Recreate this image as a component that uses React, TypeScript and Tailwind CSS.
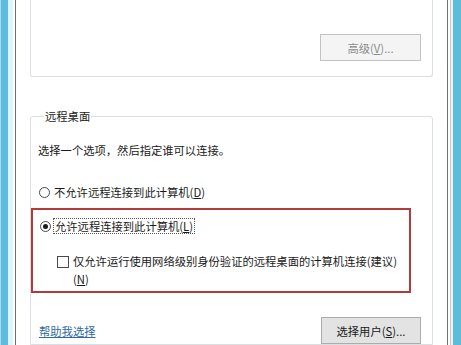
const font = "font-['Microsoft_YaHei','Noto_Sans_CJK_SC',sans-serif]";

function Radio({ checked }: { checked?: boolean }) {
  return (
    <span className="flex h-[11px] w-[11px] shrink-0 items-center justify-center rounded-full border border-[#4a4a4a] bg-white">
      {checked && <span className="h-[5px] w-[5px] rounded-full bg-[#1a1a1a]" />}
    </span>
  );
}

export default function App() {
  return (
    <div className={`flex h-[345px] w-[461px] overflow-hidden bg-white text-[11.3px] leading-[18px] text-[#1a1a1a] ${font}`}>
      {/* left window frame */}
      <div className="w-[1px] bg-[#a9dcec]" />
      <div className="w-[7px] bg-[#5cbcdc]" />
      <div className="w-[5px] bg-[#dff3f8]" />
      <div className="w-[2px] bg-white" />
      <div className="w-[1px] bg-[#707070]" />

      {/* dialog content */}
      <div className="flex w-[431px] flex-col px-[14px]">
        <div className="flex h-[88px] items-end justify-end rounded-b-[3px] border-x border-b border-[#d9dfe3] pb-[15px] pr-[11px]">
          <div className="flex h-[27px] w-[101px] items-center justify-center border border-[#c3c3c3] bg-[#f4f4f4] text-[#8c8c8c]">
            高级(<span className="underline">V</span>)...
          </div>
        </div>

        <fieldset className="mt-[31px] flex-1 rounded-t-[3px] border border-[#d9dfe3] pl-[7px] pr-[11px]">
          <legend className="ml-[6px] px-[1px] leading-[16px]">远程桌面</legend>

          <div className="mt-[17px]">选择一个选项，然后指定谁可以连接。</div>

          <div className="mt-[24px] flex items-center gap-[4px] pl-[1px]">
            <Radio />
            <span>
              不允许远程连接到此计算机(<span className="underline">D</span>)
            </span>
          </div>

          <div className="-ml-[7px] mt-[7px] h-[85px] w-[380px] border-2 border-[#b23a3a] pl-[7px] pt-[8px]">
            <div className="flex items-center gap-[2px]">
              <Radio checked />
              <span className="border border-dotted border-[#555] px-[1px] leading-[14px]">
                允许远程连接到此计算机(<span className="underline">L</span>)
              </span>
            </div>
            <div className="mt-[18px] flex items-start gap-[4px] pl-[17px]">
              <span className="mt-[4px] h-[12px] w-[12px] shrink-0 border border-[#4a4a4a] bg-white" />
              <span>
                仅允许运行使用网络级别身份验证的远程桌面的计算机连接(建议)
                <br />(<span className="underline">N</span>)
              </span>
            </div>
          </div>

          <div className="mt-[24px] flex items-center justify-between">
            <span className="pl-[1px] text-[#2f6aa6] underline">帮助我选择</span>
            <div className="flex h-[27px] w-[100px] items-center justify-center border border-[#acacac] bg-[#e3e3e3]">
              选择用户(<span className="underline">S</span>)...
            </div>
          </div>
        </fieldset>
      </div>

      {/* right window frame */}
      <div className="w-[1px] bg-[#707070]" />
      <div className="w-[2px] bg-white" />
      <div className="w-[1px] bg-[#c8c8c8]" />
      <div className="w-[2px] bg-[#e8f5f9]" />
      <div className="w-[8px] bg-[#5cbcdc]" />
    </div>
  );
}
